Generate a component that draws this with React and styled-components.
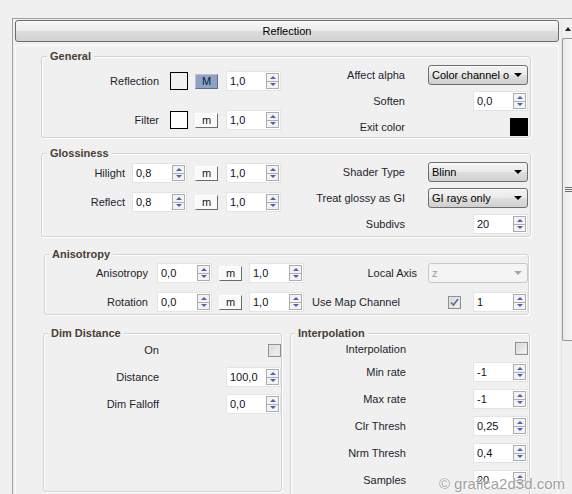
import React from "react";
import styled, { createGlobalStyle } from "styled-components";

const GlobalStyle = createGlobalStyle`
  html, body {
    margin: 0;
    padding: 0;
    background: #f0f0f0;
  }
  body {
    font-family: "Liberation Sans", Arial, sans-serif;
    font-size: 11px;
    color: #1e1e2e;
  }
`;

const px = (v) => (typeof v === "number" ? `${v}px` : v || 0);

const Window = styled.div`
  position: relative;
  width: 572px;
  height: 494px;
  overflow: hidden;
  padding: 18px 0 0 12px;
  box-sizing: border-box;
`;

const Frame = styled.div`
  display: flex;
  height: 100%;
  border-top: 1px solid #a0a0a0;
  border-left: 1px solid #a0a0a0;
`;

const Content = styled.div`
  flex: 1;
  padding: 1px 2px 0 2px;
`;

const RolloutHeader = styled.div`
  height: 22px;
  box-sizing: border-box;
  border: 1px solid #6a6a6a;
  border-radius: 3px;
  background: linear-gradient(#f6f6f6 0%, #ececec 48%, #dcdcdc 52%, #d2d2d2 100%);
  box-shadow: inset 0 1px 0 #fff;
  display: flex;
  align-items: center;
  justify-content: center;
  color: #000;
`;

const RolloutBody = styled.div`
  margin-top: 3px;
  height: 460px;
  border: 1px solid #fbfbfb;
  border-bottom: none;
  border-radius: 3px 3px 0 0;
`;

const Group = styled.div`
  box-sizing: border-box;
  width: ${(p) => p.$w}px;
  height: ${(p) => (p.$h ? `${p.$h}px` : "auto")};
  margin-left: ${(p) => p.$ml}px;
  margin-top: ${(p) => p.$mt || 0}px;
  border: 1px solid #d3d3d3;
  border-radius: 3px;
  box-shadow: inset 1px 1px 0 #fff, 1px 1px 0 #fff;
`;

const GroupTitle = styled.div`
  display: table;
  margin: -8px 0 0 ${(p) => p.$indent}px;
  padding: 0 3px;
  line-height: 14px;
  height: 14px;
  background: #f0f0f0;
  font-weight: bold;
  color: #4a4034;
`;

const Columns = styled.div`
  display: flex;
`;

const Column = styled.div`
  display: flex;
  flex-direction: column;
  flex: ${(p) => (p.$w ? "none" : 1)};
  width: ${(p) => (p.$w ? `${p.$w}px` : "auto")};
  gap: ${(p) => p.$gap || 0}px;
  padding: ${(p) => p.$pt || 0}px ${(p) => p.$pr || 0}px
    ${(p) => p.$pb || 0}px 0;
`;

const Row = styled.div`
  display: flex;
  align-items: center;
  height: ${(p) => p.$h || 20}px;
`;

const Label = styled.div`
  flex: none;
  width: ${(p) => p.$w}px;
  text-align: ${(p) => p.$align || "right"};
  padding-left: ${(p) => p.$pl || 0}px;
  box-sizing: border-box;
  white-space: nowrap;
`;

const SpinBox = styled.div`
  flex: none;
  display: flex;
  align-items: center;
  width: 55px;
  height: 20px;
  box-sizing: border-box;
  margin-left: ${(p) => px(p.$ml)};
  background: #fff;
  border: 1px solid #e4e4e4;
`;

const SpinValue = styled.div`
  flex: 1;
  padding-left: 3px;
  color: #101020;
  white-space: nowrap;
  overflow: hidden;
`;

const SpinArrows = styled.div`
  display: flex;
  flex-direction: column;
  width: 13px;
  height: 16px;
  margin-right: 1px;
`;

const SpinHalf = styled.div`
  flex: 1;
  display: flex;
  align-items: center;
  justify-content: center;
  border: 1px solid #adadad;
  background: #f3f3f3;
  & + & {
    border-top: none;
  }
  &::after {
    content: "";
    border-left: 3px solid transparent;
    border-right: 3px solid transparent;
    ${(p) =>
      p.$dir === "up"
        ? "border-bottom: 3px solid #4d60b4;"
        : "border-top: 3px solid #4d60b4;"}
  }
`;

const MiniButton = styled.div`
  flex: none;
  width: 23px;
  height: 15px;
  box-sizing: border-box;
  margin-left: ${(p) => px(p.$ml)};
  display: flex;
  align-items: center;
  justify-content: center;
  background: ${(p) => (p.$active ? "#8da2c9" : "#fafafa")};
  border-top: 1px solid ${(p) => (p.$active ? "#b4c4e0" : "#ffffff")};
  border-left: 1px solid ${(p) => (p.$active ? "#b4c4e0" : "#ffffff")};
  border-right: 1px solid #6c6c6c;
  border-bottom: 1px solid #6c6c6c;
  color: #101828;
  line-height: 1;
`;

const Swatch = styled.div`
  flex: none;
  width: 18px;
  height: 18px;
  box-sizing: border-box;
  margin-left: ${(p) => px(p.$ml)};
  background: ${(p) => p.$color};
  border: 1px solid #000;
`;

const DropBox = styled.div`
  flex: none;
  display: flex;
  align-items: center;
  width: 100px;
  height: 20px;
  box-sizing: border-box;
  margin-left: auto;
  border: 1px solid ${(p) => (p.$disabled ? "#c8c8c8" : "#6e6e6e")};
  border-radius: 3px;
  background: ${(p) =>
    p.$disabled
      ? "#f4f4f4"
      : "linear-gradient(#f3f3f3 0%, #ebebeb 48%, #dedede 52%, #d0d0d0 100%)"};
  box-shadow: ${(p) => (p.$disabled ? "none" : "inset 0 1px 0 #fbfbfb")};
  color: ${(p) => (p.$disabled ? "#9c9c9c" : "#000")};
`;

const DropText = styled.div`
  flex: 1;
  padding-left: 3px;
  white-space: nowrap;
  overflow: hidden;
`;

const DropArrow = styled.div`
  flex: none;
  width: 18px;
  display: flex;
  justify-content: center;
  &::after {
    content: "";
    border-left: 4px solid transparent;
    border-right: 4px solid transparent;
    border-top: 4px solid ${(p) => (p.$disabled ? "#a8a8a8" : "#000")};
  }
`;

const CheckBox = styled.div`
  flex: none;
  width: 13px;
  height: 13px;
  box-sizing: border-box;
  margin-left: ${(p) => px(p.$ml)};
  border: 1px solid #8e8f8f;
  background: linear-gradient(135deg, #d6d6d6, #f6f6f6);
  box-shadow: inset 0 0 0 1px #e4e4e4;
  display: flex;
  align-items: center;
  justify-content: center;
`;

const Scrollbar = styled.div`
  flex: none;
  width: 10px;
  display: flex;
  flex-direction: column;
  border-left: 1px solid #e6e6e6;
  background: #f0f0f0;
`;

const ScrollUp = styled.div`
  height: 19px;
  display: flex;
  align-items: center;
  padding-left: 3px;
  &::after {
    content: "";
    border-left: 3px solid transparent;
    border-right: 3px solid transparent;
    border-bottom: 4px solid #222;
  }
`;

const ScrollThumb = styled.div`
  height: 303px;
  box-sizing: border-box;
  border: 1px solid #979797;
  border-right: none;
  border-radius: 2px 0 0 2px;
  background: linear-gradient(90deg, #e9e9e9, #f7f7f7);
  display: flex;
  flex-direction: column;
  justify-content: center;
  gap: 1px;
  padding-left: 2px;
`;

const Grip = styled.div`
  height: 1px;
  width: 7px;
  background: #6f6f6f;
`;

const Watermark = styled.div`
  position: absolute;
  right: 7px;
  bottom: 2px;
  font-size: 15px;
  color: rgba(140, 140, 140, 0.85);
  text-shadow: 0 0 2px #fff, 0 0 1px #fff;
`;

const Spinner = ({ value, ml }) => (
  <SpinBox $ml={ml}>
    <SpinValue>{value}</SpinValue>
    <SpinArrows>
      <SpinHalf $dir="up" />
      <SpinHalf $dir="down" />
    </SpinArrows>
  </SpinBox>
);

const Dropdown = ({ value, disabled }) => (
  <DropBox $disabled={disabled}>
    <DropText>{value}</DropText>
    <DropArrow $disabled={disabled} />
  </DropBox>
);

const Check = ({ checked, ml }) => (
  <CheckBox $ml={ml}>
    {checked && (
      <svg width="9" height="9" viewBox="0 0 9 9">
        <path d="M1 4.5 L3.5 7 L8 1" fill="none" stroke="#5a6c94" strokeWidth="1.6" />
      </svg>
    )}
  </CheckBox>
);

const RightRow = ({ label, w = 123, children }) => (
  <Row>
    <Label $w={w}>{label}</Label>
    {children}
  </Row>
);

export default function App() {
  return (
    <>
      <GlobalStyle />
      <Window>
        <Frame>
          <Content>
            <RolloutHeader>Reflection</RolloutHeader>
            <RolloutBody>
              <Group $w={490} $ml={25} $mt={10}>
                <GroupTitle $indent={5}>General</GroupTitle>
                <Columns>
                  <Column $w={240} $pt={8} $gap={19}>
                    <Row>
                      <Label $w={117}>Reflection</Label>
                      <Swatch $ml={11} $color="#f0f0f0" />
                      <MiniButton $ml={7} $active>M</MiniButton>
                      <Spinner ml={8} value="1,0" />
                    </Row>
                    <Row>
                      <Label $w={117}>Filter</Label>
                      <Swatch $ml={11} $color="#ffffff" />
                      <MiniButton $ml={7}>m</MiniButton>
                      <Spinner ml={8} value="1,0" />
                    </Row>
                  </Column>
                  <Column $pt={2} $gap={6} $pr={2}>
                    <RightRow label="Affect alpha">
                      <Dropdown value="Color channel only" />
                    </RightRow>
                    <RightRow label="Soften">
                      <Spinner ml="auto" value="0,0" />
                    </RightRow>
                    <RightRow label="Exit color">
                      <Swatch $ml="auto" $color="#000" />
                    </RightRow>
                  </Column>
                </Columns>
              </Group>

              <Group $w={490} $ml={25} $mt={15}>
                <GroupTitle $indent={5}>Glossiness</GroupTitle>
                <Columns>
                  <Column $w={240} $pt={3} $gap={9}>
                    <Row>
                      <Label $w={83}>Hilight</Label>
                      <Spinner ml={7} value="0,8" />
                      <MiniButton $ml={8}>m</MiniButton>
                      <Spinner ml={8} value="1,0" />
                    </Row>
                    <Row>
                      <Label $w={83}>Reflect</Label>
                      <Spinner ml={7} value="0,8" />
                      <MiniButton $ml={8}>m</MiniButton>
                      <Spinner ml={8} value="1,0" />
                    </Row>
                  </Column>
                  <Column $pt={2} $gap={6} $pb={2} $pr={2}>
                    <RightRow label="Shader Type">
                      <Dropdown value="Blinn" />
                    </RightRow>
                    <RightRow label="Treat glossy as GI">
                      <Dropdown value="GI rays only" />
                    </RightRow>
                    <RightRow label="Subdivs">
                      <Spinner ml="auto" value="20" />
                    </RightRow>
                  </Column>
                </Columns>
              </Group>

              <Group $w={485} $ml={28} $mt={17}>
                <GroupTitle $indent={4}>Anisotropy</GroupTitle>
                <Columns>
                  <Column $w={265} $pt={2} $gap={9} $pb={2}>
                    <Row>
                      <Label $w={103}>Anisotropy</Label>
                      <Spinner ml={9} value="0,0" />
                      <MiniButton $ml={7}>m</MiniButton>
                      <Spinner ml={7} value="1,0" />
                    </Row>
                    <Row>
                      <Label $w={103}>Rotation</Label>
                      <Spinner ml={9} value="0,0" />
                      <MiniButton $ml={7}>m</MiniButton>
                      <Spinner ml={7} value="1,0" />
                    </Row>
                  </Column>
                  <Column $pt={2} $gap={9} $pb={2}>
                    <RightRow label="Local Axis" w={107}>
                      <Dropdown value="z" disabled />
                    </RightRow>
                    <Row>
                      <Label $w={138} $align="left" $pl={2}>
                        Use Map Channel
                      </Label>
                      <Check checked />
                      <Spinner ml="auto" value="1" />
                    </Row>
                  </Column>
                </Columns>
              </Group>

              <Columns style={{ marginTop: 18, marginLeft: 27 }}>
                <Group $w={239} $h={159} $ml={0}>
                  <GroupTitle $indent={4}>Dim Distance</GroupTitle>
                  <Column $gap={7}>
                    <RightRow label="On" w={115}>
                      <Check ml="auto" />
                    </RightRow>
                    <RightRow label="Distance" w={115}>
                      <Spinner ml="auto" value="100,0" />
                    </RightRow>
                    <RightRow label="Dim Falloff" w={115}>
                      <Spinner ml="auto" value="0,0" />
                    </RightRow>
                  </Column>
                </Group>
                <Group $w={240} $h={170} $ml={8}>
                  <GroupTitle $indent={4}>Interpolation</GroupTitle>
                  <Column $pt={2} $gap={7} $pr={1}>
                    <Row $h={13}>
                      <Label $w={115}>Interpolation</Label>
                      <Check ml="auto" />
                    </Row>
                    <RightRow label="Min rate" w={115}>
                      <Spinner ml="auto" value="-1" />
                    </RightRow>
                    <RightRow label="Max rate" w={115}>
                      <Spinner ml="auto" value="-1" />
                    </RightRow>
                    <RightRow label="Clr Thresh" w={115}>
                      <Spinner ml="auto" value="0,25" />
                    </RightRow>
                    <RightRow label="Nrm Thresh" w={115}>
                      <Spinner ml="auto" value="0,4" />
                    </RightRow>
                    <RightRow label="Samples" w={115}>
                      <Spinner ml="auto" value="20" />
                    </RightRow>
                  </Column>
                </Group>
              </Columns>
            </RolloutBody>
          </Content>
          <Scrollbar>
            <ScrollUp />
            <ScrollThumb>
              <Grip />
              <Grip />
              <Grip />
            </ScrollThumb>
          </Scrollbar>
        </Frame>
        <Watermark>© grafica2d3d.com</Watermark>
      </Window>
    </>
  );
}
